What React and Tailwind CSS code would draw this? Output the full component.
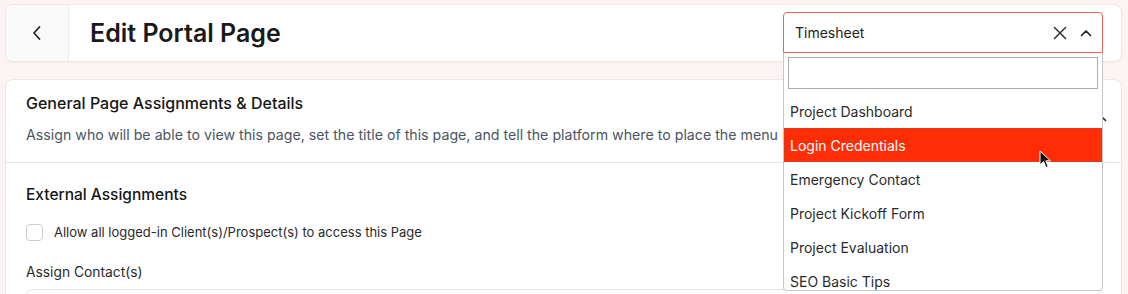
import { useState } from "react";

const OPTIONS = [
    "Project Dashboard",
    "Login Credentials",
    "Emergency Contact",
    "Project Kickoff Form",
    "Project Evaluation",
    "SEO Basic Tips",
];

function Cursor() {
    return (
        <svg className="absolute left-[1039px] top-[150px]" width="13" height="19" viewBox="0 0 13 19">
            <path d="M1 1 L1 15 L4.5 11.5 L7 17.5 L9.2 16.6 L6.8 10.8 L11.5 10.8 Z" fill="#111" stroke="#fff" strokeWidth="1" strokeLinejoin="round" />
        </svg>
    );
}

export default function App() {
    const [active] = useState("Login Credentials");

    return (
        <div className="relative h-[294px] w-[1128px] overflow-hidden bg-[#fcf4f3] pl-[5px] pr-[6px] pt-[4px] font-['Inter',sans-serif] text-[#1c1c1c]">
            {/* header */}
            <div className="flex h-[58px] overflow-hidden rounded-lg border border-[#f2e7e5] bg-white shadow-[0_1px_2px_rgba(0,0,0,0.04)]">
                <div className="flex w-[63px] items-center justify-center border-r border-[#ebebeb] bg-[#fafafa]">
                    <svg width="10" height="16" viewBox="0 0 10 16" fill="none">
                        <path d="M7.5 2 L2 8 L7.5 14" stroke="#1f1f1f" strokeWidth="1.7" strokeLinecap="round" strokeLinejoin="round" />
                    </svg>
                </div>
                <h1 className="flex items-center pl-[21px] pt-[2px] text-[25px] font-semibold text-[#1a1a1a]">Edit Portal Page</h1>
            </div>

            {/* main card */}
            <div className="mt-[17px] rounded-t-lg border border-[#efe7e5] bg-white">
                <div className="relative border-b border-[#e4e4e4] px-[20px] pb-[17px] pt-[11px]">
                    <h2 className="text-[16px] font-medium leading-6 text-[#161616]">General Page Assignments &amp; Details</h2>
                    <p className="mt-[10px] whitespace-nowrap text-[14.2px] leading-5 text-[#4b5563]">
                        Assign who will be able to view this page, set the title of this page, and tell the platform where to place the menu item.
                    </p>
                    <svg className="absolute right-[14px] top-[34px]" width="12" height="8" viewBox="0 0 12 8" fill="none">
                        <path d="M1.5 6.5 L6 2 L10.5 6.5" stroke="#222" strokeWidth="1.6" strokeLinecap="round" strokeLinejoin="round" />
                    </svg>
                </div>
                <div className="px-[20px] pt-[20px]">
                    <h3 className="text-[15.5px] font-medium leading-6 text-[#161616]">External Assignments</h3>
                    <label className="mt-[15px] flex items-center gap-[11px]">
                        <span className="h-[17px] w-[17px] rounded-[4px] border border-[#c9cdd4] bg-white"></span>
                        <span className="text-[13px] leading-5 text-[#2a2a2a]">Allow all logged-in Client(s)/Prospect(s) to access this Page</span>
                    </label>
                    <div className="mt-[20px] text-[13.8px] leading-5 text-[#2a2a2a]">Assign Contact(s)</div>
                    <div className="mt-[7px] h-[40px] rounded-md border border-[#e3e3e3]"></div>
                </div>
            </div>

            {/* select dropdown */}
            <div className="absolute left-[783px] top-[12px] w-[320px]">
                <div className="flex h-[41px] items-center rounded-t-[4px] border border-[#f0625a] bg-white pl-[11px] pr-[10px]">
                    <span className="flex-1 text-[14px] text-[#222]">Timesheet</span>
                    <svg width="14" height="14" viewBox="0 0 14 14" fill="none">
                        <path d="M1.5 1.5 L12.5 12.5 M12.5 1.5 L1.5 12.5" stroke="#333" strokeWidth="1.5" strokeLinecap="round" />
                    </svg>
                    <svg className="ml-[13px]" width="12" height="8" viewBox="0 0 12 8" fill="none">
                        <path d="M1.5 6.5 L6 2 L10.5 6.5" stroke="#222" strokeWidth="1.7" strokeLinecap="round" strokeLinejoin="round" />
                    </svg>
                </div>
                <div className="rounded-b-[4px] border-x border-b border-[#c6c6c6] bg-white">
                    <div className="px-[4px] pt-[4px]">
                        <div className="h-[32px] border border-[#acacac] bg-white"></div>
                    </div>
                    <ul className="mt-[5px] h-[196px] overflow-hidden">
                        {OPTIONS.map((option) => (
                            <li
                                key={option}
                                className={
                                    option === active
                                        ? "flex h-[34px] items-center border border-[#e3381b] bg-[#ff2d06] px-[5px] text-[14px] text-white"
                                        : "flex h-[34px] items-center px-[6px] text-[14px] text-[#2b2b2b]"
                                }
                            >
                                {option}
                            </li>
                        ))}
                    </ul>
                </div>
            </div>

            <Cursor />
        </div>
    );
}
